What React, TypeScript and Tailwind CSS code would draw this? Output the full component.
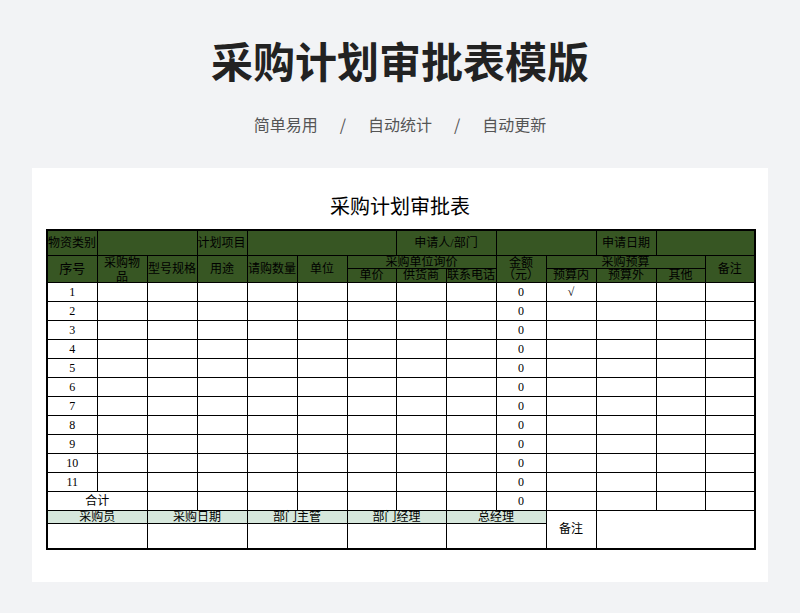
const COLS = [50, 50, 50, 50, 50, 50, 49, 50, 50, 50, 50, 60, 49, 50];
const G = "bg-[#375623]";
const td = "border border-black p-0 text-center leading-none";

export default function App() {
  const rows = Array.from({ length: 11 }, (_, i) => i + 1);
  return (
    <div className="h-[613px] w-[800px] bg-[#f2f3f5] pt-[33px]" style={{ fontFamily: '"Noto Sans CJK SC", sans-serif' }}>
      <h1 className="text-center text-[42px] font-bold leading-[54px] text-[#222]">采购计划审批表模版</h1>
      <p className="mt-[23px] flex justify-center gap-[22px] text-[16px] leading-[28px] text-[#555]">
        <span>简单易用</span><span>/</span><span>自动统计</span><span>/</span><span>自动更新</span>
      </p>
      <div className="mx-[32px] mt-[30px] h-[414px] bg-white pt-[26px] text-[12px] text-black" style={{ fontFamily: '"Liberation Serif", "Noto Sans CJK SC", serif' }}>
        <div className="mb-[11px] text-center text-[20px] leading-[24px]" style={{ fontFamily: '"Noto Sans CJK SC", serif' }}>采购计划审批表</div>
        <table className="ml-[14px] table-fixed border-collapse border-2 border-black" style={{ width: 708 }}>
          <colgroup>{COLS.map((w, i) => <col key={i} style={{ width: w }} />)}</colgroup>
          <tbody>
            <tr className={`h-[25px] ${G}`}>
              <td className={`${td} text-left`}>物资类别</td>
              <td className={td} colSpan={2}></td>
              <td className={`${td} text-left`}>计划项目</td>
              <td className={td} colSpan={3}></td>
              <td className={td} colSpan={2}>申请人/部门</td>
              <td className={td} colSpan={2}></td>
              <td className={td}>申请日期</td>
              <td className={td} colSpan={2}></td>
            </tr>
            <tr className={`h-[13px] ${G}`}>
              <td className={`${td} text-[13px]`} rowSpan={2}>序号</td>
              <td className={td} rowSpan={2}><div className="mx-auto h-[26px] w-[38px] overflow-hidden leading-[14px]">采购物品</div></td>
              <td className={td} rowSpan={2}>型号规格</td>
              <td className={td} rowSpan={2}>用途</td>
              <td className={td} rowSpan={2}>请购数量</td>
              <td className={td} rowSpan={2}>单位</td>
              <td className={td} colSpan={3}>采购单位询价</td>
              <td className={`${td} leading-[13px]`} rowSpan={2}>金额<br />（元）</td>
              <td className={td} colSpan={3}>采购预算</td>
              <td className={td} rowSpan={2}>备注</td>
            </tr>
            <tr className={`h-[13px] ${G}`}>
              <td className={td}>单价</td><td className={td}>供货商</td><td className={td}>联系电话</td>
              <td className={td}>预算内</td><td className={td}>预算外</td><td className={td}>其他</td>
            </tr>
            {rows.map((n) => (
              <tr key={n} className="h-[19px]">
                {COLS.map((_, c) => (
                  <td key={c} className={td}>{c === 0 ? n : c === 9 ? 0 : c === 10 && n === 1 ? "√" : ""}</td>
                ))}
              </tr>
            ))}
            <tr className="h-[19px]">
              <td className={td} colSpan={2}>合计</td>
              {COLS.slice(2).map((_, c) => <td key={c} className={td}>{c === 7 ? 0 : ""}</td>)}
            </tr>
            <tr className="h-[12px]">
              {["采购员", "采购日期", "部门主管", "部门经理", "总经理"].map((t) => (
                <td key={t} className={`${td} bg-[#d6e7dc]`} colSpan={2}>{t}</td>
              ))}
              <td className={td} rowSpan={2}>备注</td>
              <td className={td} rowSpan={2} colSpan={3}></td>
            </tr>
            <tr className="h-[26px]">
              {[0, 1, 2, 3, 4].map((i) => <td key={i} className={td} colSpan={2}></td>)}
            </tr>
          </tbody>
        </table>
      </div>
    </div>
  );
}
